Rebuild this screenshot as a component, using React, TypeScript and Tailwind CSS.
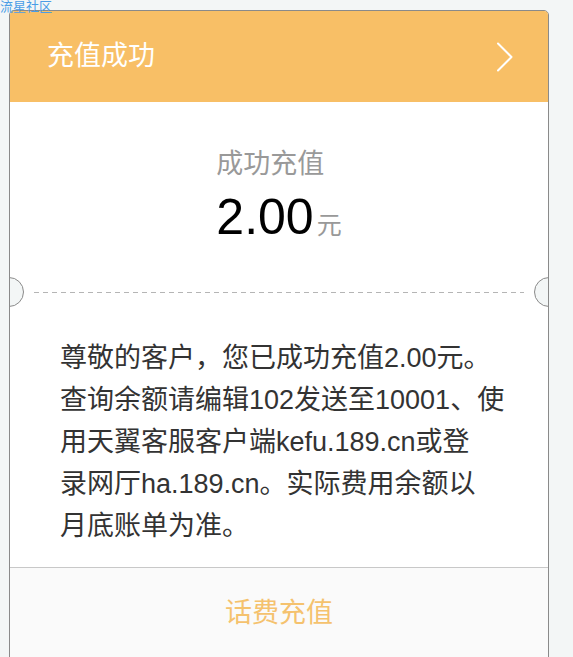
const font = "font-['Liberation_Sans','Noto_Sans_CJK_SC',sans-serif]";

// half circle cut out of the card edge
const Notch = ({ side }: { side: "left" | "right" }) => (
  <div
    className={`absolute top-[-15px] h-[30px] w-[16px] overflow-hidden ${
      side === "left" ? "left-[-1px]" : "right-[-1px]"
    }`}
  >
    <div
      className={`absolute top-0 h-[30px] w-[30px] rounded-full border border-[#8a8a8a] bg-[#f3f6f6] ${
        side === "left" ? "left-[-15px]" : "right-[-15px]"
      }`}
    />
  </div>
);

export default function App() {
  return (
    <div className={`relative h-[657px] w-[573px] overflow-hidden bg-[#f3f6f6] pl-[9px] pt-[10px] ${font}`}>
      <div className="w-[540px] overflow-hidden rounded-t-[5px] border border-[#8a8a8a] bg-white">
        <div className="flex h-[91px] items-center justify-between bg-[#f8bf66] pl-[37px] pr-[34px]">
          <span className="text-[27px] text-white">充值成功</span>
          <svg width="18" height="30" viewBox="0 0 18 30" fill="none" stroke="white" strokeWidth="2" strokeLinecap="round" strokeLinejoin="round">
            <polyline points="2,1.5 15.5,15 2,28.5" />
          </svg>
        </div>

        <div className="flex justify-center pt-[44px] pb-[46px]">
          <div className="flex flex-col items-start">
            <span className="text-[27px] leading-[36px] text-[#999999]">成功充值</span>
            <div className="mt-[6px] flex items-baseline">
              <span className="text-[50px] leading-[58px] text-black">2.00</span>
              <span className="ml-[3px] text-[25px] text-[#999999]">元</span>
            </div>
          </div>
        </div>

        <div className="relative h-px">
          <Notch side="left" />
          <Notch side="right" />
          <div className="mx-[24px] h-px bg-[linear-gradient(to_right,#b5b5b5_5px,transparent_5px)] bg-[length:9px_1px]" />
        </div>

        <div className="px-[50px] pt-[44px] pb-[20px] text-[27px] leading-[42px] text-[#333333]">
          <p className="whitespace-nowrap">尊敬的客户，您已成功充值2.00元。</p>
          <p className="whitespace-nowrap">查询余额请编辑102发送至10001、使</p>
          <p className="whitespace-nowrap">用天翼客服客户端kefu.189.cn或登</p>
          <p className="whitespace-nowrap">录网厅ha.189.cn。实际费用余额以</p>
          <p className="whitespace-nowrap">月底账单为准。</p>
        </div>

        <div className="flex h-[100px] items-center justify-center border-t border-[#c8c8c8] bg-[#fafafa] pb-[8px]">
          <span className="text-[27px] text-[#f5c26e]">话费充值</span>
        </div>
      </div>

      <span className="absolute left-0 top-0 text-[13px] leading-[13px] text-[#4a9de6]">流星社区</span>
    </div>
  );
}
